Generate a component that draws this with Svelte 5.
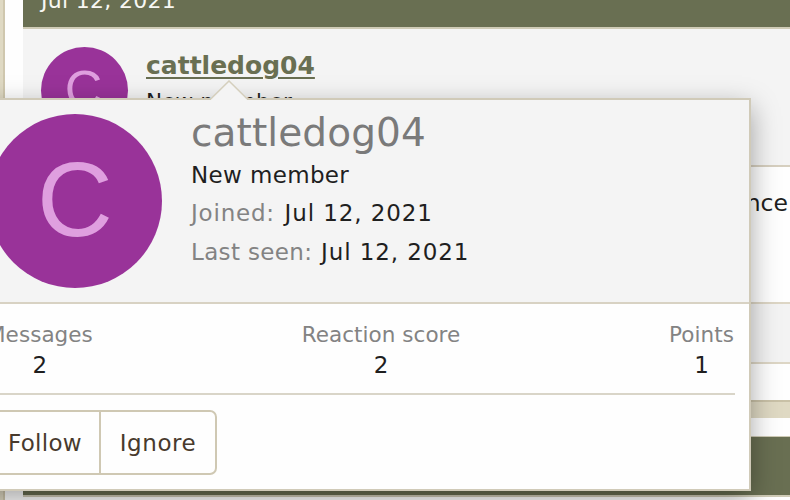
<script>
  let user = {
    name: "cattledog04",
    title: "New member",
    joined: "Jul 12, 2021",
    lastSeen: "Jul 12, 2021",
  };

  let stats = [
    { label: "Messages", value: 2 },
    { label: "Reaction score", value: 2 },
    { label: "Points", value: 1 },
  ];
</script>

<div class="page">
  <div class="block">
    <div class="message">
      <header class="date"><span>{user.joined}</span></header>
      <div class="user">
        <div class="avatar small"><span>C</span></div>
        <div class="who">
          <a class="username" href="#member">{user.name}</a>
          <div class="title">{user.title}</div>
        </div>
      </div>
      <div class="body"><span>nce</span></div>
      <div class="actions"></div>
      <div class="reply"></div>
    </div>
  </div>
  <div class="gap"></div>
  <div class="block next">
    <div class="message">
      <header class="bar"></header>
    </div>
  </div>

  <div class="tooltip">
    <svg class="arrow" width="38" height="20" viewBox="0 0 38 20">
      <path d="M1 20 L1.5 18.3 L19 1 L36.5 18.3 L37 20 Z" fill="#f4f4f4" />
      <path d="M1 18.8 L19 1 L37 18.8" fill="none" stroke="#d5cfbd" stroke-width="1.5" />
    </svg>
    <div class="card">
      <div class="avatar"><span>C</span></div>
      <div class="info">
        <h4>{user.name}</h4>
        <div class="line">{user.title}</div>
        <div class="line">
          <span class="muted joined">Joined:</span> <span class="value">{user.joined}</span>
        </div>
        <div class="line">
          <span class="muted">Last seen:</span> <span class="value">{user.lastSeen}</span>
        </div>
      </div>
    </div>
    <div class="details">
      <div class="stats">
        {#each stats as stat}
          <dl>
            <dt>{stat.label}</dt>
            <dd>{stat.value}</dd>
          </dl>
        {/each}
      </div>
      <div class="buttons">
        <button class="follow">Follow</button>
        <button>Ignore</button>
      </div>
    </div>
  </div>
</div>

<style>
  :global(body) {
    margin: 0;
    overflow: hidden;
  }
  .page {
    position: relative;
    height: 500px;
    overflow: hidden;
    box-sizing: border-box;
    background: #dfd9c3;
    color: #1f1f1f;
    font-family: Verdana, "DejaVu Sans", sans-serif;
    font-size: 23px;
  }
  .block {
    margin-left: 3px;
    padding-left: 18px;
    border-left: 2px solid #cfc7ae;
    background: #fefefe;
  }
  .date {
    display: flex;
    align-items: flex-end;
    height: 27px;
    padding: 0 0 7px 18px;
    box-sizing: border-box;
    background: #696f52;
    color: #f7f7f3;
    font-size: 22px;
    letter-spacing: 0.3px;
    line-height: 38px;
  }
  .user {
    display: flex;
    height: 138px;
    padding: 18px 18px 0;
    box-sizing: border-box;
    border-top: 2px solid #cfcbb6;
    background: #f4f4f4;
  }
  .avatar {
    display: flex;
    flex: none;
    align-items: center;
    justify-content: center;
    width: 174px;
    height: 174px;
    padding-bottom: 4px;
    box-sizing: border-box;
    border-radius: 50%;
    background: #993399;
    color: #df9fdf;
    font-family: "Liberation Sans", Arial, sans-serif;
    font-size: 105px;
    line-height: 1;
  }
  .avatar.small {
    width: 87px;
    height: 87px;
    padding: 0 2px 3px 0;
    font-size: 52px;
  }
  .who {
    padding-left: 18px;
  }
  .username {
    display: block;
    color: #696f52;
    font-size: 25px;
    font-weight: bold;
    line-height: 38px;
    text-decoration: underline;
    text-decoration-thickness: 2px;
    text-underline-offset: 3px;
  }
  .title {
    font-size: 21.5px;
    letter-spacing: 0.15px;
    line-height: 34px;
  }
  .body {
    height: 137px;
    padding: 18px 2px 0 0;
    box-sizing: border-box;
    border-top: 2px solid #d6cfbf;
    font-size: 23.5px;
    line-height: 36px;
    text-align: right;
  }
  .actions {
    height: 62px;
    box-sizing: border-box;
    border-top: 2px solid #ddd6c5;
    border-bottom: 2px solid #ddd6c5;
    background: #f3f3f3;
  }
  .reply {
    height: 36px;
  }
  .gap {
    height: 18px;
    box-sizing: border-box;
    border-top: 2px solid #c9c1a7;
  }
  .next {
    height: 82px;
    padding-top: 18px;
    box-sizing: border-box;
  }
  .bar {
    height: 61px;
    box-sizing: border-box;
    border-top: 1px solid #cfcbb6;
    border-bottom: 2px solid #cfcbb6;
    background: #696f52;
  }
  .tooltip {
    position: absolute;
    top: 98px;
    left: -28px;
    width: 779px;
    height: 393px;
    box-sizing: border-box;
    border: 2px solid #d0cab8;
    background: #fefefe;
    box-shadow: 0 9px 26px rgba(0, 0, 0, 0.35);
  }
  .arrow {
    position: absolute;
    top: -20px;
    left: 236px;
  }
  .card {
    display: flex;
    gap: 29px;
    height: 204px;
    padding: 14px 14px 0;
    box-sizing: border-box;
    border-bottom: 2px solid #d8d2c3;
    background: #f4f4f4;
  }
  .info {
    margin-top: -4px;
  }
  h4 {
    margin: 0;
    color: #7a7a7a;
    font-size: 39px;
    font-weight: normal;
    letter-spacing: 0.1px;
    line-height: 45.5px;
  }
  .line {
    letter-spacing: 0.35px;
    line-height: 38.5px;
  }
  .muted,
  dt {
    color: #838383;
  }
  .joined {
    margin-right: 1px;
    letter-spacing: 0.8px;
  }
  .value {
    margin-left: 1px;
    letter-spacing: 0.9px;
  }
  .details {
    padding: 15px 14px 0;
  }
  .stats {
    display: flex;
    justify-content: space-between;
    height: 76px;
    box-sizing: border-box;
    border-bottom: 2px solid #d9d5c8;
  }
  dl {
    margin: 0 1px 0 -1px;
    text-align: center;
  }
  dt {
    font-size: 21.5px;
    letter-spacing: 0.05px;
    line-height: 31px;
  }
  dd {
    margin: 0;
    line-height: 30px;
  }
  .buttons {
    display: flex;
    width: 229px;
    height: 65px;
    margin-top: 15px;
    box-sizing: border-box;
    border: 2px solid #cfc8b3;
    border-radius: 7px;
  }
  button {
    flex: 1;
    padding: 0;
    border: 0;
    background: none;
    color: #483a2d;
    font: inherit;
    letter-spacing: 0.6px;
  }
  .follow {
    flex: 0 0 111px;
    padding-left: 1px;
    box-sizing: border-box;
    border-right: 2px solid #cfc8b3;
    letter-spacing: 0.3px;
  }
</style>
